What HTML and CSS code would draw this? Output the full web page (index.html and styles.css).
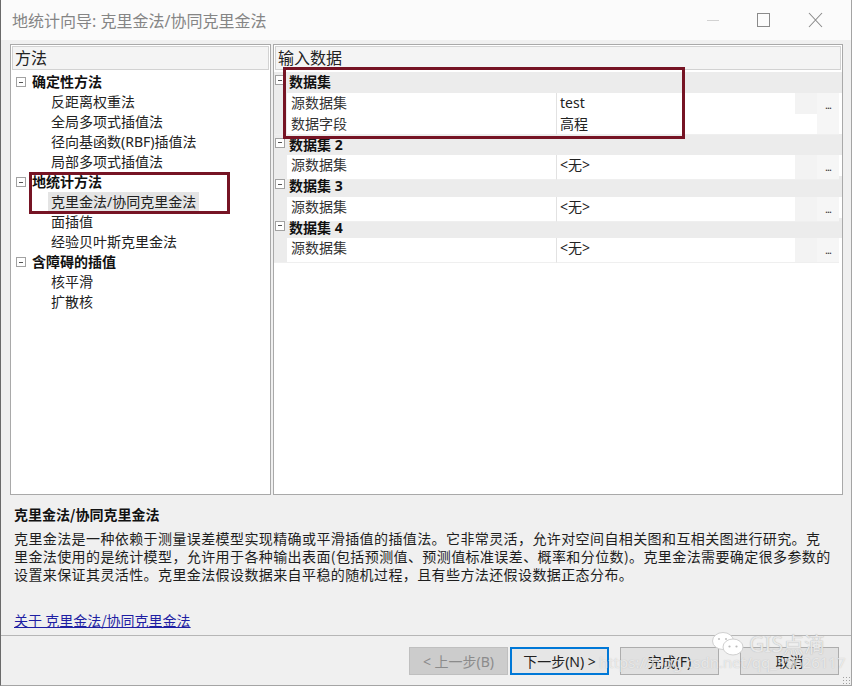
FILE: index.html
```html
<!DOCTYPE html>
<html lang="zh-CN">
<head>
  <meta charset="UTF-8" />
  <title>地统计向导: 克里金法/协同克里金法</title>
  <link rel="stylesheet" href="styles.css">
</head>
<body>
  <div class="window">
    <div class="titlebar">
      <span class="title">地统计向导: 克里金法/协同克里金法</span>
      <div class="controls">
        <svg class="ctl" width="46" height="30" viewBox="0 0 46 30"><line x1="18" y1="15.5" x2="30" y2="15.5" stroke="#d2d2d2" stroke-width="1"/></svg>
        <svg class="ctl" width="46" height="30" viewBox="0 0 46 30"><rect x="16.5" y="8.5" width="12" height="13" fill="none" stroke="#8a8a8a" stroke-width="1"/></svg>
        <svg class="ctl" width="46" height="30" viewBox="0 0 46 30"><path d="M16 8 L29 22 M29 8 L16 22" stroke="#8a8a8a" stroke-width="1.1" fill="none"/></svg>
      </div>
    </div>

    <div class="panes">
      <div class="pane methods">
        <div class="pane-head">方法</div>
        <ul class="tree">
          <li class="group"><span class="toggle"></span>确定性方法</li>
          <li class="leaf">反距离权重法</li>
          <li class="leaf">全局多项式插值法</li>
          <li class="leaf">径向基函数(RBF)插值法</li>
          <li class="leaf">局部多项式插值法</li>
          <li class="group"><span class="toggle"></span>地统计方法</li>
          <li class="leaf"><span class="selected">克里金法/协同克里金法</span></li>
          <li class="leaf">面插值</li>
          <li class="leaf">经验贝叶斯克里金法</li>
          <li class="group"><span class="toggle"></span>含障碍的插值</li>
          <li class="leaf">核平滑</li>
          <li class="leaf">扩散核</li>
        </ul>
      </div>

      <div class="pane inputs">
        <div class="pane-head">输入数据</div>
        <div class="grid">
          <div class="cat"><span class="toggle"></span><span class="cat-name">数据集</span></div>
          <div class="prop"><span class="gutter"></span><span class="name">源数据集</span><span class="val">test</span><span class="pick"></span><span class="more">...</span></div>
          <div class="prop"><span class="gutter"></span><span class="name">数据字段</span><span class="val wide">高程</span><span class="more"></span></div>
          <div class="cat"><span class="toggle"></span><span class="cat-name">数据集 2</span></div>
          <div class="prop"><span class="gutter"></span><span class="name">源数据集</span><span class="val">&lt;无&gt;</span><span class="pick"></span><span class="more">...</span></div>
          <div class="cat"><span class="toggle"></span><span class="cat-name">数据集 3</span></div>
          <div class="prop"><span class="gutter"></span><span class="name">源数据集</span><span class="val">&lt;无&gt;</span><span class="pick"></span><span class="more">...</span></div>
          <div class="cat"><span class="toggle"></span><span class="cat-name">数据集 4</span></div>
          <div class="prop"><span class="gutter"></span><span class="name">源数据集</span><span class="val">&lt;无&gt;</span><span class="pick"></span><span class="more">...</span></div>
        </div>
      </div>
    </div>

    <div class="desc">
      <div class="desc-title">克里金法/协同克里金法</div>
      <p class="desc-text">克里金法是一种依赖于测量误差模型实现精确或平滑插值的插值法。它非常灵活，允许对空间自相关图和互相关图进行研究。克里金法使用的是统计模型，允许用于各种输出表面(包括预测值、预测值标准误差、概率和分位数)。克里金法需要确定很多参数的设置来保证其灵活性。克里金法假设数据来自平稳的随机过程，且有些方法还假设数据正态分布。</p>
      <a class="desc-link" href="#">关于 克里金法/协同克里金法</a>
    </div>

    <div class="footer">
      <button class="btn disabled">&lt; 上一步(B)</button>
      <button class="btn default">下一步(N) &gt;</button>
      <button class="btn finish">完成(F)</button>
      <button class="btn cancel">取消</button>
      <span class="grip"></span>
    </div>

    <!-- annotation boxes and watermark over the dialog -->
    <div class="mark mark-tree"></div>
    <div class="mark mark-grid"></div>
    <div class="watermark">
      <svg class="wm-icon" width="34" height="28" viewBox="0 0 34 28">
        <ellipse cx="12" cy="11" rx="10.5" ry="8.5" fill="#fff" stroke="#d0d0d0"/>
        <ellipse cx="22" cy="17" rx="10" ry="8" fill="#fff" stroke="#d0d0d0"/>
        <circle cx="8" cy="9" r="1.1" fill="#c4c4c4"/><circle cx="15" cy="9" r="1.1" fill="#c4c4c4"/>
        <circle cx="18.5" cy="16.5" r="1.1" fill="#bbb"/><circle cx="25.5" cy="16.5" r="1.1" fill="#bbb"/>
      </svg>
      <span class="wm-name">GIS点滴</span>
    </div>
    <div class="wm-url">https://blog.csdn.net/qq_38626117</div>
  </div>
</body>
</html>
```

FILE: styles.css
```css
:root {
  --bg: #f0f0f0;
  --pane-border: #a9a9a9;
  --head-bg: #f4f4f4;
  --cat-bg: #ececec;
  --line: #e2e2e2;
  --mark: #761424;
  --text: #1a1a1a;
}

body {
  margin: 0;
  background: var(--bg);
  font-family: "Noto Sans", "Noto Sans CJK SC", sans-serif;
  color: var(--text);
}

.window {
  width: 852px;
  height: 686px;
  box-sizing: border-box;
  border-left: 1px solid #6a6a6a;
  border-right: 1px solid #a4a4a4;
  border-bottom: 1px solid #a4a4a4;
  background: var(--bg);
  display: flex;
  flex-direction: column;
  position: relative;
  overflow: hidden;
}

/* title bar */
.titlebar {
  height: 40px;
  flex: none;
  background: #fbfbfb;
  display: flex;
  align-items: center;
  padding-left: 11px;
}

.title {
  flex: 1;
  font-size: 16px;
  color: #858585;
}

.controls {
  display: flex;
  margin-right: 12px;
}

.ctl {
  display: block;
  margin-left: 6px;
}

/* the two panes */
.panes {
  height: 455px;
  flex: none;
  display: flex;
  gap: 2px;
  padding: 4px 8px 0 9px;
  box-sizing: border-box;
}

.pane {
  background: #fff;
  border: 1px solid var(--pane-border);
  display: flex;
  flex-direction: column;
}

.methods {
  width: 261px;
  box-sizing: border-box;
}

.inputs {
  flex: 1;
}

.pane-head {
  height: 24px;
  margin: 1px;
  box-sizing: border-box;
  border: 1px solid #d2d2d2;
  background: var(--head-bg);
  font-size: 16px;
  line-height: 22px;
  padding-left: 2px;
  color: #222;
}

.tree {
  list-style: none;
  margin: 0;
  padding: 1px 0 0;
  font-size: 14px;
  line-height: 20px;
}

.tree li {
  height: 20px;
  white-space: nowrap;
}

.group {
  display: flex;
  align-items: center;
  font-weight: bold;
  color: #111;
}

.leaf {
  padding-left: 40px;
  color: #222;
}

.selected {
  display: inline-block;
  background: #e4e4e4;
  padding: 0 3px;
  margin-left: -3px;
}

.toggle {
  width: 10px;
  height: 10px;
  box-sizing: border-box;
  border: 1px solid #a2a2a2;
  background: #fff;
  position: relative;
  flex: none;
}

.toggle::after {
  content: "";
  position: absolute;
  left: 2px;
  right: 2px;
  top: 3.5px;
  height: 1px;
  background: #555;
}

.group .toggle {
  margin: 0 6px 0 5px;
}

/* property grid */
.grid {
  padding-top: 1px;
  font-size: 14px;
}

.cat {
  height: 20.8px;
  display: flex;
  align-items: center;
  background: var(--cat-bg);
}

.cat .toggle {
  margin: -4px 4px 0 1px;
}

.cat-name {
  font-weight: bold;
  color: #111;
  line-height: 20px;
}

.prop {
  height: 20.8px;
  display: grid;
  grid-template-columns: 13px 270px 238px 22px 22px;
  line-height: 20px;
}

.prop > span {
  box-sizing: border-box;
  border-bottom: 1px solid #efefef;
}

.gutter {
  background: var(--cat-bg);
}

.name {
  background: #fff;
  padding-left: 4px;
  border-right: 1px solid var(--line);
  color: #333;
}

.val {
  background: #fff;
  padding-left: 3px;
  color: #222;
}

.val.wide {
  grid-column: span 2;
}

.pick {
  background: #f3f3f3;
}

.more {
  background: #f6f6f6;
  font-size: 11px;
  text-align: center;
  line-height: 24px;
  letter-spacing: -1px;
  color: #333;
}

/* description */
.desc {
  height: 140px;
  flex: none;
  box-sizing: border-box;
  padding: 9px 19px 0 13px;
  font-family: "Noto Sans CJK SC", sans-serif;
}

.desc-title {
  font-size: 14px;
  font-weight: bold;
  line-height: 20px;
  color: #111;
}

.desc-text {
  margin: 5px 0 0;
  font-size: 14px;
  letter-spacing: 0.4px;
  line-height: 18px;
  color: #1e1e1e;
}

.desc-link {
  display: inline-block;
  margin-top: 27px;
  font-size: 14px;
  line-height: 20px;
  color: #1f1fa3;
}

/* buttons */
.footer {
  flex: 1;
  border-top: 1px solid #b6b6b6;
  display: flex;
  align-items: flex-start;
  padding: 11px 0 0 408px;
  position: relative;
}

.btn {
  width: 99px;
  height: 28px;
  box-sizing: border-box;
  font-family: inherit;
  font-size: 14px;
  color: #222;
  background: #e1e1e1;
  border: 1px solid #adadad;
  padding: 0;
}

.btn.disabled {
  background: #cccccc;
  border-color: #bfbfbf;
  color: #8b8b8b;
}

.btn.default {
  margin-left: 2px;
  border: 2px solid #0078d7;
  background: #e6e6e6;
}

.btn.finish {
  margin-left: 11px;
}

.btn.cancel {
  margin-left: 21px;
}

.grip {
  position: absolute;
  right: 1px;
  bottom: 1px;
  width: 8px;
  height: 8px;
  background-image: radial-gradient(#a0a0a0 40%, transparent 45%);
  background-size: 3px 3px;
}

/* overlays */
.mark {
  position: absolute;
  border: 3px solid var(--mark);
  box-sizing: border-box;
}

.mark-tree {
  left: 28px;
  top: 172px;
  width: 201px;
  height: 42px;
}

.mark-grid {
  left: 282px;
  top: 67px;
  width: 402px;
  height: 72px;
}

.watermark {
  position: absolute;
  left: 710px;
  top: 630px;
  display: flex;
  align-items: center;
  gap: 4px;
}

.wm-name {
  font-size: 21px;
  line-height: 26px;
  color: #e8e8e8;
  text-shadow: 0 0 1px #a8a8a8;
}

.wm-url {
  position: absolute;
  left: 598px;
  top: 652px;
  font-size: 15px;
  line-height: 20px;
  color: rgba(255, 255, 255, 0.65);
  text-shadow: 0 0 1px rgba(140, 140, 140, 0.5);
  white-space: nowrap;
}
```
